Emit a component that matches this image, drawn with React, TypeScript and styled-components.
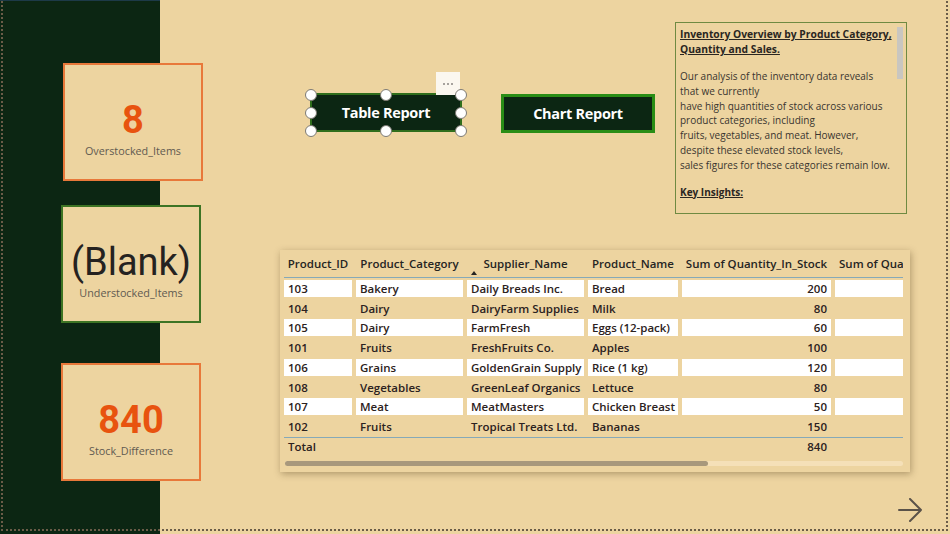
import React from "react";
import styled, { createGlobalStyle } from "styled-components";

const Global = createGlobalStyle`
  html, body { margin: 0; padding: 0; background: #edd4a0; }
  * { box-sizing: border-box; }
`;

const BEIGE = "#edd4a0";
const DARK = "#0c2613";
const ORANGE = "#e8530f";

const Page = styled.div`
  position: relative;
  width: 950px;
  height: 534px;
  overflow: hidden;
  display: flex;
  background: linear-gradient(to right, ${DARK} 0 160px, ${BEIGE} 160px);
  font-family: "Open Sans", "Noto Sans", sans-serif;
  &::before {
    content: "";
    position: absolute;
    left: 0; top: 0; height: 1px;
    width: 160px;
    background: #1d3a48;
  }
  &::after {
    content: "";
    position: absolute;
    left: 1px; top: -2px; right: 2px; bottom: 3px;
    border: 2px dotted #6a5c48;
    pointer-events: none;
  }
`;

const CardsColumn = styled.div`
  width: 203px;
  flex: none;
  display: flex;
  flex-direction: column;
  padding-top: 63px;
`;

const Card = styled.div<{ $ml: number; $mt: number; $border: string }>`
  margin-left: ${(p) => p.$ml}px;
  margin-top: ${(p) => p.$mt}px;
  width: 140px;
  height: 118px;
  border: 2px solid ${(p) => p.$border};
  background: ${BEIGE};
  display: flex;
  flex-direction: column;
  align-items: center;
  padding-top: 35px;
`;

const CardValue = styled.div<{ $color: string; $weight: number }>`
  font-family: Roboto, "Liberation Sans", sans-serif;
  font-size: 38px;
  line-height: 40px;
  font-weight: ${(p) => p.$weight};
  color: ${(p) => p.$color};
`;

const CardLabel = styled.div`
  margin-top: 4px;
  font-family: "Open Sans", sans-serif;
  font-size: 10.8px;
  line-height: 14px;
  color: #615a50;
`;

const Main = styled.div`
  flex: 1;
  display: flex;
  flex-direction: column;
`;

const TopRow = styled.div`
  height: 250px;
  display: flex;
  align-items: flex-start;
`;

const Buttons = styled.div`
  display: flex;
  align-items: flex-start;
  margin-top: 93px;
  margin-left: 107px;
  gap: 39px;
`;

const ReportButton = styled.div<{ $border: string; $bw: number; $mt: number }>`
  position: relative;
  margin-top: ${(p) => p.$mt}px;
  width: ${(p) => (p.$bw === 3 ? 154 : 152)}px;
  height: 39px;
  background: ${DARK};
  border: ${(p) => p.$bw}px solid ${(p) => p.$border};
  display: flex;
  align-items: center;
  justify-content: center;
  color: #ffffff;
  font-family: "Open Sans", sans-serif;
  font-weight: 700;
  font-size: 14.5px;
  letter-spacing: -0.3px;
`;

const Handle = styled.span<{ $x: string; $y: string }>`
  position: absolute;
  left: ${(p) => p.$x};
  top: ${(p) => p.$y};
  width: 12px;
  height: 12px;
  margin: -6px 0 0 -6px;
  border-radius: 50%;
  background: #ffffff;
  border: 1px solid #7d7a74;
`;

const MoreBox = styled.span`
  position: absolute;
  right: 0;
  top: -23px;
  width: 24px;
  height: 23px;
  background: #fbf7ef;
  display: flex;
  align-items: center;
  justify-content: center;
  gap: 2px;
`;

const Dot = styled.i`
  width: 2px;
  height: 2px;
  border-radius: 50%;
  background: #8a8682;
`;

const TextBox = styled.div`
  margin-top: 22px;
  margin-left: auto;
  margin-right: 43px;
  width: 232px;
  height: 192px;
  border: 1px solid #6f8a42;
  position: relative;
  padding: 4px 0 0 4px;
  font-family: "Open Sans", sans-serif;
  font-size: 10px;
  line-height: 14.8px;
  color: #2a2622;
  white-space: pre-line;
`;

const TextTitle = styled.div`
  font-weight: 700;
  text-decoration: underline;
  margin-bottom: 12px;
  font-size: 10.3px;
  line-height: 15px;
`;

const TextBody = styled.div`
  font-weight: 400;
  color: #3a352f;
`;

const KeyInsights = styled.div`
  margin-top: 12px;
  font-weight: 700;
  text-decoration: underline;
`;

const ScrollThumb = styled.span`
  position: absolute;
  right: 3px;
  top: 4px;
  width: 6px;
  height: 52px;
  background: #c9c6c0;
`;

const TableCard = styled.div`
  margin-left: 77px;
  width: 630px;
  height: 222px;
  background: ${BEIGE};
  box-shadow: 1px 2px 7px rgba(60, 40, 10, 0.35);
  padding: 0 0 0 4px;
  display: flex;
  flex-direction: column;
  font-family: "Open Sans", sans-serif;
  font-size: 11.5px;
  font-weight: 600;
  color: #2b2120;
`;

const Grid = styled.div`
  display: grid;
  grid-template-columns: 68px 107px 117px 90px 149px 68px;
  column-gap: 4px;
  width: 619px;
`;

const HeaderRow = styled(Grid)`
  height: 28px;
  align-items: center;
  border-bottom: 1.5px solid #86a9b8;
`;

const HeadCell = styled.div<{ $left?: boolean }>`
  text-align: ${(p) => (p.$left ? "left" : "center")};
  padding-left: ${(p) => (p.$left ? 4 : 0)}px;
  white-space: nowrap;
  overflow: hidden;
  color: #252423;
`;

const HeadWrap = styled.div`
  position: relative;
  align-self: stretch;
  display: flex;
  align-items: center;
  justify-content: center;
  color: #252423;
`;

const SortArrow = styled.span`
  position: absolute;
  left: 4px;
  bottom: 2px;
  width: 0;
  height: 0;
  border-left: 3.5px solid transparent;
  border-right: 3.5px solid transparent;
  border-bottom: 4px solid #252423;
`;

const Body = styled.div`
  padding-top: 0.5px;
`;

const Row = styled(Grid)`
  height: 19.75px;
  align-items: center;
`;

const Cell = styled.div<{ $white: boolean; $right?: boolean }>`
  height: 17px;
  line-height: 17px;
  padding: 0 4px;
  background: ${(p) => (p.$white ? "#ffffff" : "transparent")};
  text-align: ${(p) => (p.$right ? "right" : "left")};
  white-space: nowrap;
  overflow: hidden;
`;

const TotalRow = styled(Grid)`
  border-top: 1.5px solid #86a9b8;
  height: 18px;
  align-items: center;
`;

const ScrollTrack = styled.div`
  margin-top: 6px;
  margin-left: 1px;
  width: 618px;
  height: 5px;
  border-radius: 3px;
  background: #f5e0b8;
  display: flex;
`;

const ScrollBar = styled.div`
  width: 423px;
  height: 5px;
  border-radius: 3px;
  background: #a8987c;
`;

const NextArrow = styled.div`
  align-self: flex-end;
  margin-top: 26px;
  margin-right: 27px;
  width: 26px;
  height: 24px;
`;

const rows = [
  ["103", "Bakery", "Daily Breads Inc.", "Bread", "200"],
  ["104", "Dairy", "DairyFarm Supplies", "Milk", "80"],
  ["105", "Dairy", "FarmFresh", "Eggs (12-pack)", "60"],
  ["101", "Fruits", "FreshFruits Co.", "Apples", "100"],
  ["106", "Grains", "GoldenGrain Supply", "Rice (1 kg)", "120"],
  ["108", "Vegetables", "GreenLeaf Organics", "Lettuce", "80"],
  ["107", "Meat", "MeatMasters", "Chicken Breast", "50"],
  ["102", "Fruits", "Tropical Treats Ltd.", "Bananas", "150"],
];

const bodyText = `Our analysis of the inventory data reveals
that we currently
have high quantities of stock across various
product categories, including
fruits, vegetables, and meat. However,
despite these elevated stock levels,
sales figures for these categories remain low.`;

export default function App() {
  return (
    <>
      <Global />
      <Page>
        <CardsColumn>
          <Card $ml={63} $mt={0} $border="#e8783a">
            <CardValue $color={ORANGE} $weight={700}>8</CardValue>
            <CardLabel>Overstocked_Items</CardLabel>
          </Card>
          <Card $ml={61} $mt={24} $border="#3d7424">
            <CardValue $color="#252220" $weight={400}>(Blank)</CardValue>
            <CardLabel>Understocked_Items</CardLabel>
          </Card>
          <Card $ml={61} $mt={40} $border="#e8783a">
            <CardValue $color={ORANGE} $weight={700}>840</CardValue>
            <CardLabel>Stock_Difference</CardLabel>
          </Card>
        </CardsColumn>
        <Main>
          <TopRow>
            <Buttons>
              <ReportButton $border="#2f6e1c" $bw={2} $mt={0}>
                Table Report
                <MoreBox>
                  <Dot />
                  <Dot />
                  <Dot />
                </MoreBox>
                <Handle $x="-1px" $y="0%" />
                <Handle $x="50%" $y="0%" />
                <Handle $x="calc(100% + 1px)" $y="0%" />
                <Handle $x="-1px" $y="50%" />
                <Handle $x="calc(100% + 1px)" $y="50%" />
                <Handle $x="-1px" $y="calc(100% + 1px)" />
                <Handle $x="50%" $y="calc(100% + 1px)" />
                <Handle $x="calc(100% + 1px)" $y="calc(100% + 1px)" />
              </ReportButton>
              <ReportButton $border="#2a8d16" $bw={3} $mt={1}>
                Chart Report
              </ReportButton>
            </Buttons>
            <TextBox>
              <TextTitle>
                {"Inventory Overview by Product Category,\nQuantity and Sales."}
              </TextTitle>
              <TextBody>{bodyText}</TextBody>
              <KeyInsights>Key Insights:</KeyInsights>
              <ScrollThumb />
            </TextBox>
          </TopRow>
          <TableCard>
            <HeaderRow>
              <HeadCell>Product_ID</HeadCell>
              <HeadCell>Product_Category</HeadCell>
              <HeadWrap>
                Supplier_Name
                <SortArrow />
              </HeadWrap>
              <HeadCell>Product_Name</HeadCell>
              <HeadCell>Sum of Quantity_In_Stock</HeadCell>
              <HeadCell $left>Sum of Quantity_Sold</HeadCell>
            </HeaderRow>
            <Body>
              {rows.map((r, i) => {
                const white = i % 2 === 0;
                return (
                  <Row key={r[0]}>
                    <Cell $white={white}>{r[0]}</Cell>
                    <Cell $white={white}>{r[1]}</Cell>
                    <Cell $white={white}>{r[2]}</Cell>
                    <Cell $white={white}>{r[3]}</Cell>
                    <Cell $white={white} $right>
                      {r[4]}
                    </Cell>
                    <Cell $white={white} />
                  </Row>
                );
              })}
            </Body>
            <TotalRow>
              <Cell $white={false}>Total</Cell>
              <Cell $white={false} />
              <Cell $white={false} />
              <Cell $white={false} />
              <Cell $white={false} $right>
                840
              </Cell>
              <Cell $white={false} />
            </TotalRow>
            <ScrollTrack>
              <ScrollBar />
            </ScrollTrack>
          </TableCard>
          <NextArrow>
            <svg width="26" height="24" viewBox="0 0 26 24" fill="none">
              <path
                d="M2 12 H24 M13 1 L24 12 L13 23"
                stroke="#5a5249"
                strokeWidth="2"
                strokeLinecap="round"
                strokeLinejoin="round"
              />
            </svg>
          </NextArrow>
        </Main>
      </Page>
    </>
  );
}
